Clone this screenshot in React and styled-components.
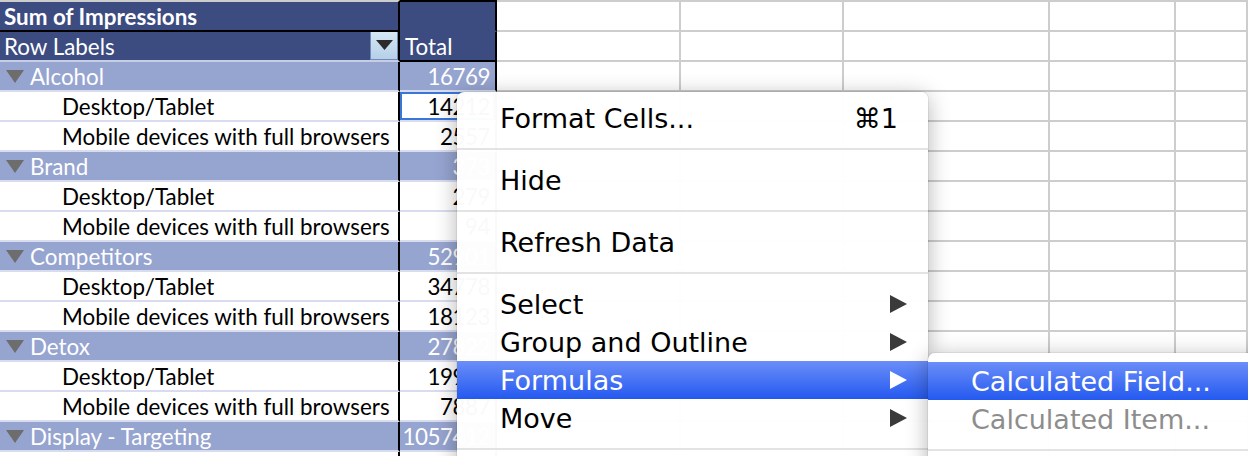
import React from 'react'
import styled, { createGlobalStyle } from 'styled-components'

const GlobalStyle = createGlobalStyle`
  html, body {
    margin: 0;
    padding: 0;
    background: #ffffff;
  }
  * {
    box-sizing: border-box;
  }
`

const NAVY = '#3c4b80'
const GROUP = '#96a4d0'
const LAVENDER = '#d8dcee'
const GRID = '#cdcdcd'

const groups = [
  { name: 'Alcohol', total: '16769', items: [['Desktop/Tablet', '14212'], ['Mobile devices with full browsers', '2557']] },
  { name: 'Brand', total: '373', items: [['Desktop/Tablet', '279'], ['Mobile devices with full browsers', '94']] },
  { name: 'Competitors', total: '52901', items: [['Desktop/Tablet', '34778'], ['Mobile devices with full browsers', '18123']] },
  { name: 'Detox', total: '27822', items: [['Desktop/Tablet', '19935'], ['Mobile devices with full browsers', '7887']] },
  { name: 'Display - Targeting', total: '1057412', items: [] },
]

const Page = styled.div`
  position: relative;
  width: 1248px;
  height: 456px;
  overflow: hidden;
  background: #ffffff;
`

const Sheet = styled.div`
  display: flex;
  flex-direction: column;
  padding-top: 2px;
  font-family: Lato, "Open Sans", sans-serif;
  font-size: 22.4px;
`

const Row = styled.div`
  display: grid;
  grid-template-columns: 400px 97px 184px 163px 206px 126px 1fr;
  height: 30px;
`

const Cell = styled.div`
  display: flex;
  align-items: flex-end;
  justify-content: ${p => (p.$right ? 'flex-end' : 'flex-start')};
  padding: 0 ${p => (p.$right ? '5px' : '0')} 0 ${p => p.$indent || 0}px;
  line-height: 27px;
  letter-spacing: ${p => (p.$right ? '-0.5px' : 'normal')};
  white-space: nowrap;
  overflow: hidden;
  background: ${p => p.$bg || '#ffffff'};
  color: ${p => p.$color || '#000000'};
  font-weight: ${p => (p.$bold ? 700 : 400)};
  border-bottom: 2px solid ${p => p.$line || GRID};
  border-right: 2px solid ${p => p.$edge || GRID};
  border-top: ${p => (p.$top ? `2px solid ${p.$top}` : 'none')};
  height: ${p => (p.$top ? '32px' : '30px')};
  box-shadow: ${p => (p.$selected ? 'inset 0 0 0 2px #3876d8' : 'none')};
  margin-top: ${p => (p.$top ? '-2px' : '0')};
`

const LabelWrap = styled.div`
  position: relative;
  display: flex;
  align-items: flex-end;
  width: 100%;
  height: 100%;
`

const FilterButton = styled.div`
  position: absolute;
  right: 0;
  top: -1px;
  width: 28px;
  height: 29px;
  border: 1px solid #6f8db4;
  background: linear-gradient(#d6e6f4, #b6d0e9);
  display: flex;
  justify-content: center;
  padding-top: 8px;
`

const Toggle = styled.svg`
  width: 18px;
  height: 13px;
  margin: 0 6px 7px 6px;
  flex: none;
`

const Menu = styled.div`
  position: absolute;
  left: 457px;
  top: 92px;
  width: 471px;
  height: 400px;
  padding-top: 7px;
  border-radius: 7px 7px 0 0;
  background: rgba(255, 255, 255, 0.975);
  box-shadow: 0 4px 22px rgba(0, 0, 0, 0.3), 0 0 0 1px rgba(0, 0, 0, 0.06);
  font-family: "DejaVu Sans", "Noto Sans", sans-serif;
  font-size: 27px;
  color: #000000;
`

const SubMenu = styled(Menu)`
  left: 928px;
  top: 353px;
  width: 340px;
  padding-top: 9px;
  border-radius: 7px 0 0 0;
`

const Item = styled.div`
  display: flex;
  align-items: center;
  height: 38px;
  padding: 0 21px 0 43px;
  background: ${p => (p.$active ? 'linear-gradient(#6b8ef8, #2459f0)' : 'transparent')};
  color: ${p => (p.$active ? '#ffffff' : p.$disabled ? '#8d8d8d' : '#000000')};
`

const ItemLabel = styled.span`
  flex: 1;
  white-space: nowrap;
`

const Shortcut = styled.span`
  margin-right: 9px;
`

const Separator = styled.div`
  height: 24px;
  display: flex;
  align-items: center;
  &::after {
    content: '';
    display: block;
    width: 100%;
    height: 2px;
    background: #e3e3e3;
  }
`

function Arrow({ color }) {
  return (
    <svg width="17" height="18" viewBox="0 0 17 18">
      <polygon points="0,0 17,9 0,18" fill={color} />
    </svg>
  )
}

function Triangle() {
  return (
    <Toggle viewBox="0 0 18 13">
      <polygon points="0,0 18,0 9,13" fill="#6d6d6d" />
    </Toggle>
  )
}

function EmptyCells() {
  return [0, 1, 2, 3, 4].map(i => <Cell key={i} />)
}

export default function App() {
  const rows = []
  groups.forEach(g => {
    rows.push({ type: 'group', label: g.name, value: g.total })
    g.items.forEach(([label, value]) => rows.push({ type: 'item', label, value }))
  })
  // the next row lies below the window edge
  rows.push({ type: 'item', label: '', value: '' })

  return (
    <Page>
      <GlobalStyle />
      <Sheet>
        <Row>
          <Cell $bg={NAVY} $color="#fff" $bold $indent={4} $line="#000" $edge="#000" $top={GRID}>
            Sum of Impressions
          </Cell>
          <Cell $bg={NAVY} $line={NAVY} $edge="#000" $top="#000" />
          {[0, 1, 2, 3, 4].map(i => <Cell key={i} $top={GRID} />)}
        </Row>
        <Row>
          <Cell $bg={NAVY} $color="#fff" $indent={4} $line="#c6cde5" $edge="#000">
            <LabelWrap>
              Row Labels
              <FilterButton>
                <svg width="17" height="10" viewBox="0 0 17 10">
                  <polygon points="0,0 17,0 8.5,10" fill="#2b2b2b" />
                </svg>
              </FilterButton>
            </LabelWrap>
          </Cell>
          <Cell $bg={NAVY} $color="#fff" $indent={5} $line="#000" $edge="#000">Total</Cell>
          <EmptyCells />
        </Row>
        {rows.map((r, i) =>
          r.type === 'group' ? (
            <Row key={i}>
              <Cell $bg={GROUP} $color="#fff" $line={LAVENDER} $edge="#000">
                <Triangle />
                {r.label}
              </Cell>
              <Cell $bg={GROUP} $color="#fff" $right $line={LAVENDER} $edge="#000">{r.value}</Cell>
              <EmptyCells />
            </Row>
          ) : (
            <Row key={i}>
              <Cell $indent={62} $line={LAVENDER} $edge="#000">{r.label}</Cell>
              <Cell $right $line={LAVENDER} $edge="#000" $selected={i === 1}>{r.value}</Cell>
              <EmptyCells />
            </Row>
          )
        )}
      </Sheet>

      <Menu>
        <Item>
          <ItemLabel>Format Cells...</ItemLabel>
          <Shortcut>⌘1</Shortcut>
        </Item>
        <Separator />
        <Item><ItemLabel>Hide</ItemLabel></Item>
        <Separator />
        <Item><ItemLabel>Refresh Data</ItemLabel></Item>
        <Separator />
        <Item><ItemLabel>Select</ItemLabel><Arrow color="#3a3a3a" /></Item>
        <Item><ItemLabel>Group and Outline</ItemLabel><Arrow color="#3a3a3a" /></Item>
        <Item $active><ItemLabel>Formulas</ItemLabel><Arrow color="#ffffff" /></Item>
        <Item><ItemLabel>Move</ItemLabel><Arrow color="#3a3a3a" /></Item>
        <Separator />
      </Menu>

      <SubMenu>
        <Item $active><ItemLabel>Calculated Field...</ItemLabel></Item>
        <Item $disabled><ItemLabel>Calculated Item...</ItemLabel></Item>
        <Separator />
      </SubMenu>
    </Page>
  )
}
